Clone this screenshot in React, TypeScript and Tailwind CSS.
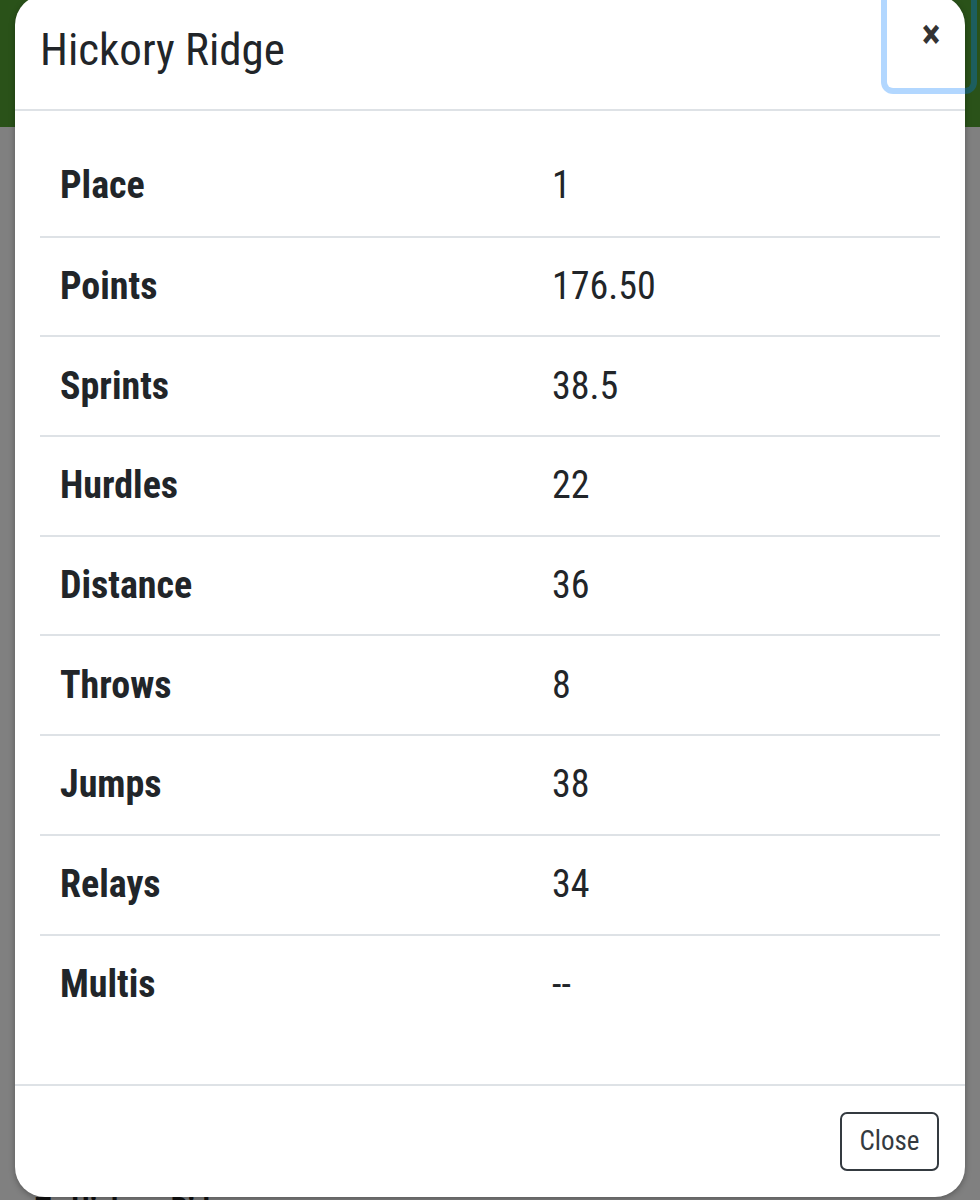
import React from "react"

// Team scoring breakdown shown in a modal over the standings page
const ROWS: Array<[string, string]> = [
  ["Place", "1"],
  ["Points", "176.50"],
  ["Sprints", "38.5"],
  ["Hurdles", "22"],
  ["Distance", "36"],
  ["Throws", "8"],
  ["Jumps", "38"],
  ["Relays", "34"],
  ["Multis", "--"],
]

export default function App() {
  return (
    <div className="relative w-[980px] h-[1200px] overflow-hidden bg-[#808080] font-['Roboto_Condensed',Roboto,sans-serif] font-stretch-condensed text-[#212529]">
      {/* page behind the backdrop */}
      <div className="h-[127px] bg-[#2a5219]" />
      <div className="absolute left-[35px] top-[1193px] flex gap-[20px] text-[30px] font-bold leading-none text-[#111]">
        <span>T</span>
        <span>Hickory Ridge</span>
      </div>

      {/* modal */}
      <div className="absolute left-[15px] top-[-5px] w-[950px] h-[1202px] bg-white rounded-[30px] flex flex-col shadow-[0_2px_6px_rgba(0,0,0,0.3)]">
        <div className="relative h-[116px] shrink-0 border-b-2 border-[#dee2e6] px-[25px] pt-[27px]">
          <h5 className="text-[45px] leading-[56px] font-normal">Hickory Ridge</h5>
          <button className="absolute right-[-6px] top-0 w-[84px] h-[93px] rounded-[6px] shadow-[0_0_0_6px_rgba(0,123,255,0.3)] flex justify-center pt-[20px] pl-[4px]">
            <span className="text-[40px] leading-[40px] font-bold text-[#333]">×</span>
          </button>
        </div>

        <div className="flex-1 px-[25px] pt-[25px]">
          {ROWS.map(([label, value], i) => (
            <div
              key={label}
              className={`grid grid-cols-[492px_1fr] items-center h-[99.7px] ${i > 0 ? "border-t-2 border-[#dee2e6]" : ""}`}
            >
              <span className="pl-[20px] text-[38px] font-bold">{label}</span>
              <span className="pl-[20px] text-[38px]">{value}</span>
            </div>
          ))}
        </div>

        <div className="h-[113px] shrink-0 border-t-2 border-[#dee2e6] flex items-center justify-end px-[26px]">
          <button className="h-[59px] w-[99px] border-2 border-[#343a40] rounded-[7px] text-[27px] text-[#343a40]">
            Close
          </button>
        </div>
      </div>
    </div>
  )
}
